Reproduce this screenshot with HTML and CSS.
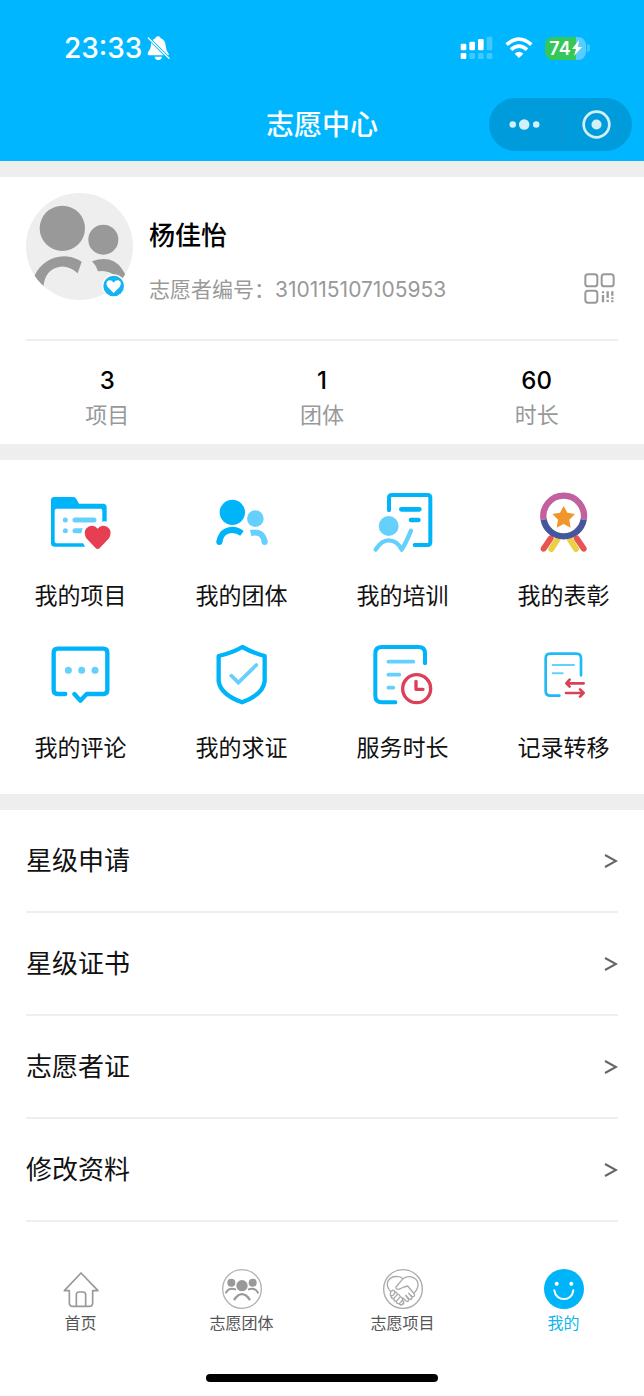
FILE: index.html
```html
<!DOCTYPE html>
<html lang="zh-CN">
<head>
<meta charset="utf-8">
<meta name="viewport" content="width=device-width, initial-scale=1">
<title>志愿中心</title>
<link rel="stylesheet" href="styles.css">
</head>
<body>
<header class="header">
  <div class="status">
    <div class="status-left">
      <span class="time">23:33</span>
      <svg class="bell" viewBox="441 108 69 75" aria-hidden="true">
        <path fill="#fff" d="M474 109q7 0 8 6q14 5 15 22q1 15 9 25q2 4-2 4H446q-5-3-2-9q8-8 9-21q-2-14 13-21q1-6 8-6zM464 170h22q-2 10-11 10t-11-10z"/>
        <path stroke="#00b7ff" stroke-width="9" d="M443 112l68 67"/>
        <path stroke="#fff" stroke-width="4" stroke-linecap="round" d="M445 114l62 61"/>
      </svg>
    </div>
    <div class="status-right">
      <svg class="signal" viewBox="417 108 99 72" fill="#fff" aria-hidden="true">
        <rect x="419" y="131" width="17" height="20" rx="4"/><rect x="445" y="125" width="17" height="26" rx="4"/><rect x="471" y="117" width="17" height="34" rx="4"/>
        <rect x="419" y="159" width="17" height="18" rx="4"/>
        <g opacity=".25"><rect x="497" y="110" width="17" height="41" rx="4"/><rect x="445" y="159" width="17" height="18" rx="4"/><rect x="471" y="159" width="17" height="18" rx="4"/><rect x="497" y="159" width="17" height="18" rx="4"/></g>
      </svg>
      <svg class="wifi" viewBox="550 108 84 72" fill="none" stroke="#fff" stroke-width="11" aria-hidden="true">
        <path d="M555 134q37-33 74 0M568 149q24-21 48 0"/><path fill="#fff" stroke="none" d="M579 161q13-11 26 0l-13 13z"/>
      </svg>
      <div class="battery"><span class="battery-level">74<svg class="bolt" viewBox="0 0 10 16" aria-hidden="true"><path fill="#fff" d="M7 0L0 9h4L2 16l8-9H6z"/></svg></span></div>
    </div>
  </div>
  <div class="navbar">
    <h1 class="title">志愿中心</h1>
    <div class="capsule">
      <button class="capsule-btn" type="button" aria-label="更多">
        <svg class="dots" viewBox="564 350 94 46" aria-hidden="true"><g fill="#d2effc"><circle cx="575" cy="373" r="10"/><circle cx="610" cy="373" r="16"/><circle cx="647" cy="373" r="10"/></g></svg>
      </button>
      <button class="capsule-btn" type="button" aria-label="关闭">
        <svg class="target" viewBox="781 330 86 86" aria-hidden="true"><circle cx="824" cy="373" r="38" fill="none" stroke="#d2effc" stroke-width="8"/><circle cx="824" cy="373" r="15" fill="#d2effc"/></svg>
      </button>
    </div>
  </div>
</header>
<main class="main">
  <section class="profile">
    <div class="user">
      <svg class="avatar" viewBox="78 68 321 321" aria-hidden="true">
        <defs><clipPath id="face"><circle cx="238.500" cy="228.500" r="160.500"/></clipPath></defs>
        <circle cx="238.500" cy="228.500" r="160.500" fill="#eee"/>
        <g clip-path="url(#face)">
          <g fill="#999"><circle cx="187" cy="174" r="68"/><circle cx="310" cy="208" r="45"/>
          <path d="M98 335A96 96 0 0 1 245 274L233 309Q209 287 182 289Q135 295 130 350z"/>
          <path d="M276 273Q336 252 366 296L384 325L350 320Q325 297 294 303Q290 287 276 273z"/></g>
        </g>
        <circle cx="341" cy="347" r="35" fill="#fff"/><circle cx="341" cy="347" r="31" fill="#15b3f0"/>
        <path fill="#fff" d="M341 368l-18-18q-9-15 4-20q9-1 14 7q5-8 14-7q13 5 4 20z"/>
      </svg>
      <div class="user-info">
        <h2 class="name">杨佳怡</h2>
        <p class="number">志愿者编号：310115107105953</p>
      </div>
      <button class="qr" type="button" aria-label="二维码">
        <svg class="qr-icon" viewBox="785 309 93 93" fill="none" stroke="#999" stroke-width="6" aria-hidden="true"><rect x="789" y="313" width="36" height="36" rx="8"/><rect x="838" y="313" width="36" height="36" rx="8"/><rect x="789" y="362" width="36" height="36" rx="8"/><path stroke-width="7" d="M842 364v6M842 375v22M856 364v20M856 389v7M870 364v13M870 382v5M870 391v6"/></svg>
      </button>
    </div>
    <dl class="stats">
      <div class="stat"><dt class="stat-label">项目</dt><dd class="stat-value">3</dd></div>
      <div class="stat"><dt class="stat-label">团体</dt><dd class="stat-value">1</dd></div>
      <div class="stat"><dt class="stat-label">时长</dt><dd class="stat-value">60</dd></div>
    </dl>
  </section>

  <nav class="grid" aria-label="我的服务">
    <a class="tile" href="#projects">
      <svg class="tile-icon" viewBox="133 48 216 216" aria-hidden="true">
        <path fill="#00b4fa" fill-rule="evenodd" d="M161 81h57q6 0 9 6l8 14h72q11 0 11 11v118H161q-10 0-10-10V91q0-10 10-10zM168 116q-6 0-6 6v92q0 6 6 6h131q6 0 6-6v-92q0-6-6-6z"/>
        <g stroke="#66d0fc" stroke-width="15" stroke-linecap="round"><path d="M194 150h.1M194 182h.1M223 150h57M223 182h30"/></g>
        <path fill="#fff" d="M255 233l-7-12q-6-20-6-32q3-26 27-31l22 5 18-9q12-2 20 8v72h-74z"/>
        <path fill="#e83e52" d="M291 237q-4 0-7-4l-27-28q-9-17-1-29q8-10 20-9q10 1 15 9q5-8 15-9q12-1 20 9q8 12-1 29l-27 28q-3 4-7 4z"/>
      </svg>
      <span>我的项目</span></a>
    <a class="tile" href="#groups">
      <svg class="tile-icon" viewBox="616 48 216 216" fill="none" stroke-width="18" aria-hidden="true">
        <circle cx="695" cy="127" r="38" fill="#00b4fa"/><circle cx="764" cy="146" r="25" fill="#66d0fc"/>
        <path stroke="#00b4fa" d="M656 216Q660 192 677 184Q700 173 724 190"/><circle cx="656" cy="216" r="9" fill="#00b4fa"/>
        <path stroke="#66d0fc" d="M750 189Q786 180 792 216"/><circle cx="792" cy="216" r="9" fill="#66d0fc"/>
      </svg>
      <span>我的团体</span></a>
    <a class="tile" href="#training">
      <svg class="tile-icon" viewBox="133 48 216 216" fill="none" stroke-linecap="round" stroke-linejoin="round" aria-hidden="true">
        <path stroke="#00b4fa" stroke-width="12" d="M199 121V84q0-9 9-9h106q9 0 9 9v132q0 9-9 9h-38"/>
        <path stroke="#00b4fa" stroke-width="14" d="M236 118h54M265 150h22"/>
        <circle cx="198" cy="168" r="30" fill="#66d0fc"/>
        <path stroke="#66d0fc" stroke-width="13" d="M159 239Q176 211 198 211Q224 211 237 239Q250 219 265 182"/>
      </svg>
      <span>我的培训</span></a>
    <a class="tile" href="#awards">
      <svg class="tile-icon" viewBox="616 48 216 216" fill="none" aria-hidden="true">
        <g stroke-linecap="round" stroke-width="18"><path stroke="#ecd044" d="M686 237l18-28M760 237l-18-28"/><path stroke="#e8544f" d="M663 236l21-31M783 236l-21-31"/></g>
        <circle cx="723" cy="141" r="61" fill="#fff"/>
        <path stroke="#c3609f" stroke-width="19" d="M663 149A61 61 0 1 1 783 149"/><path stroke="#46569c" stroke-width="19" d="M663 149A61 61 0 0 0 783 149"/>
        <path fill="#f0962b" d="M723 108l11 20 23 4-17 17 4 24-21-11-21 11 4-24-17-17 23-4z"/>
      </svg>
      <span>我的表彰</span></a>
    <a class="tile" href="#comments">
      <svg class="tile-icon" viewBox="133 54 216 216" fill="none" stroke-linecap="round" stroke-linejoin="round" aria-hidden="true">
        <path stroke="#00b4fa" stroke-width="13" d="M194 222h-23q-12 0-12-12V98q0-12 12-12h137q12 0 12 12v112q0 12-12 12h-50l-19 20-18-20"/>
        <path stroke="#66d0fc" stroke-width="21" d="M203 151h.1M243 151h.1M283 151h.1"/>
      </svg>
      <span>我的评论</span></a>
    <a class="tile" href="#verify">
      <svg class="tile-icon" viewBox="616 54 216 216" fill="none" aria-hidden="true">
        <path stroke="#00b4fa" stroke-width="13" stroke-linejoin="round" d="M725 81q30 17 67 27v76q-4 39-68 63q-64-24-70-63v-76q40-9 71-27z"/>
        <path stroke="#66d0fc" stroke-width="11" stroke-linecap="round" d="M692 167l21 21 54-53"/>
      </svg>
      <span>我的求证</span></a>
    <a class="tile" href="#hours">
      <svg class="tile-icon" viewBox="133 54 216 216" fill="none" stroke-linecap="round" stroke-linejoin="round" aria-hidden="true">
        <path stroke="#00b4fa" stroke-width="12" d="M307 130v-30q0-19-20-19H178q-20 0-20 19v128q0 19 20 19h40"/>
        <path stroke="#66d0fc" stroke-width="11" d="M197 125h75M197 164h33M197 203h15"/>
        <circle cx="282" cy="206" r="42" stroke="#db4057" stroke-width="10"/><path stroke="#db4057" stroke-width="10" d="M280 184v24h21"/>
      </svg>
      <span>服务时长</span></a>
    <a class="tile" href="#transfer">
      <svg class="tile-icon" viewBox="616 54 216 216" fill="none" stroke-linecap="round" stroke-linejoin="round" aria-hidden="true">
        <path stroke="#1fb9f7" stroke-width="8" d="M775 166v-51q0-14-14-14h-78q-14 0-14 14v98q0 14 14 14h27"/>
        <path stroke="#66d0fc" stroke-width="6" d="M690 135h64M690 160h30"/>
        <path stroke="#db4057" stroke-width="8" d="M783 190h-52l10-11M731 190l10 10M730 219h53l-11-11M783 219l-11 11"/>
      </svg>
      <span>记录转移</span></a>
  </nav>

  <nav class="menu" aria-label="设置">
    <a class="row" href="#apply"><span>星级申请</span><svg class="chevron" viewBox="0 0 14 16" aria-hidden="true"><path d="M1 2l11 6-11 6"/></svg></a>
    <a class="row" href="#certificate"><span>星级证书</span><svg class="chevron" viewBox="0 0 14 16" aria-hidden="true"><path d="M1 2l11 6-11 6"/></svg></a>
    <a class="row" href="#card"><span>志愿者证</span><svg class="chevron" viewBox="0 0 14 16" aria-hidden="true"><path d="M1 2l11 6-11 6"/></svg></a>
    <a class="row" href="#edit"><span>修改资料</span><svg class="chevron" viewBox="0 0 14 16" aria-hidden="true"><path d="M1 2l11 6-11 6"/></svg></a>
  </nav>
</main>
<footer class="footer">
  <nav class="tabs" aria-label="主导航">
    <a class="tab" href="#home">
      <svg class="tab-icon" viewBox="181 87 120 120" fill="none" stroke="#999" stroke-width="5" stroke-linejoin="round" aria-hidden="true"><path d="M241 99l51 53h-16v36q0 11-11 11h-48q-11 0-11-11v-36h-15z"/><path d="M227 198v-34q0-8 8-8h12q8 0 8 8v34"/></svg>
      <span>首页</span></a>
    <a class="tab" href="#team">
      <svg class="tab-icon" viewBox="664 87 120 120" fill="none" stroke="#999" aria-hidden="true"><circle cx="724" cy="147" r="58" stroke="#b2b2b2" stroke-width="4"/><g fill="#999" stroke="none"><circle cx="692" cy="128" r="12"/><circle cx="756" cy="128" r="12"/><circle cx="724" cy="137" r="17"/></g><g stroke-width="6"><path d="M675 160q9-20 31-11M773 160q-9-20-31-11"/><path stroke-width="7" d="M700 180q24-35 48 0"/></g></svg>
      <span>志愿团体</span></a>
    <a class="tab" href="#project">
      <svg class="tab-icon" viewBox="181 87 120 120" fill="none" stroke="#aaa" stroke-width="4" stroke-linecap="round" stroke-linejoin="round" aria-hidden="true"><circle cx="241" cy="147" r="58"/><path d="M204 155q-14-17-9-30q9-18 32-15q8 1 14 6q9-7 22-6q21 4 23 22q1 13-10 25M241 116l-21 25q-2 7 8 7l16-7 11-3 20 24q3 9-6 8l-11-10M258 160l10 12q0 8-8 5l-11-11M249 167l9 12q-1 8-8 4l-9-9M242 183q4 8-3 11h-6M204 155l-1 10q5 5 10-1l4-7q-1-7-7-6zM205 167q0 9 8 9l11-13q-1-8-8-6M213 176q1 8 8 8l12-14q-2-8-9-7M221 184q1 8 9 7l10-11q-1-8-7-10M230 191q2 6 8 3l5-7q-1-5-4-6"/></svg>
      <span>志愿项目</span></a>
    <a class="tab tab-active" href="#mine" aria-current="page">
      <svg class="tab-icon" viewBox="663 87 120 120" aria-hidden="true"><circle cx="723" cy="147" r="60" fill="#00b4fa"/><circle cx="701" cy="131" r="6" fill="#fff"/><circle cx="745" cy="131" r="6" fill="#fff"/><path fill="none" stroke="#fff" stroke-width="6" stroke-linecap="round" d="M694 151c5 35 53 35 57 0"/></svg>
      <span>我的</span></a>
  </nav>
  <div class="home-bar"></div>
</footer>
</body>
</html>
```

FILE: styles.css
```css
* {
  box-sizing: border-box;
}

body {
  margin: 0;
  background: #fff;
  color: #111;
  font-family: Inter, "Noto Sans CJK SC", sans-serif;
}

h1, h2, p, dl, dd {
  margin: 0;
}

a {
  color: inherit;
  text-decoration: none;
}

button {
  padding: 0;
  border: 0;
  background: none;
}

svg {
  display: block;
  flex: none;
}

.header {
  height: 161px;
  background: #00b7ff;
  color: #fff;
}

.status {
  display: flex;
  justify-content: space-between;
  align-items: center;
  height: 96px;
  padding: 0 54px 0 64px;
}

.status-left,
.status-right {
  display: flex;
  align-items: center;
}

.status-left {
  gap: 5px;
}

.status-right {
  gap: 12px;
}

.time {
  font-size: 28px;
  font-weight: 500;
}

.bell {
  width: 23px;
  height: 25px;
}

.signal {
  width: 33px;
  height: 24px;
}

.wifi {
  width: 28px;
  height: 24px;
}

.battery {
  display: flex;
  align-items: center;
  gap: 1px;
}

.battery::after {
  content: "";
  width: 3px;
  height: 8px;
  border-radius: 0 4px 4px 0;
  background: #40c9ff;
}

.battery-level {
  display: flex;
  align-items: center;
  justify-content: center;
  gap: 1px;
  width: 41px;
  height: 23px;
  border-radius: 8px;
  background: linear-gradient(to right, #34c759 75%, #59cdff 75%);
  font-size: 18px;
  font-weight: 600;
}

.bolt {
  width: 10px;
  height: 16px;
}

.navbar {
  display: grid;
  grid-template-columns: 1fr auto 1fr;
  align-items: center;
  height: 57px;
  padding: 0 12px;
}

.title {
  grid-column: 2;
  font-size: 28px;
  font-weight: 500;
  line-height: 40px;
}

.capsule {
  display: flex;
  justify-self: end;
  width: 143px;
  height: 53px;
  padding: 10px 0;
  border-radius: 27px;
  background: #009bdb;
}

.capsule-btn {
  display: flex;
  flex: 1;
  align-items: center;
  justify-content: center;
}

.capsule-btn + .capsule-btn {
  border-left: 1px solid #1293cb;
}

.dots {
  width: 31px;
  height: 15px;
}

.target {
  width: 29px;
  height: 29px;
}

.profile {
  border-top: 16px solid #eee;
}

.user {
  display: flex;
  gap: 16px;
  margin: 0 26px;
  padding: 16px 0 33px;
  border-bottom: 2px solid #eee;
}

.avatar {
  width: 107px;
  height: 107px;
}

.user-info {
  flex: 1;
  padding-top: 23px;
}

.name {
  color: #000;
  font-size: 26px;
  font-weight: 500;
  line-height: 40px;
}

.number {
  margin-top: 18px;
  color: #999;
  font-size: 21px;
  line-height: 32px;
}

.qr {
  align-self: flex-end;
  margin: 0 3px 2px 0;
}

.qr-icon {
  width: 31px;
  height: 31px;
}

.stats {
  display: grid;
  grid-template-columns: repeat(3, 1fr);
  padding: 22px 0 13px;
  text-align: center;
}

.stat {
  display: flex;
  flex-direction: column-reverse;
}

.stat-value {
  color: #000;
  font-size: 24px;
  font-weight: 500;
  line-height: 36px;
}

.stat-label {
  color: #999;
  font-size: 22px;
  line-height: 32px;
}

.grid {
  display: grid;
  grid-template-columns: repeat(4, 1fr);
  row-gap: 24px;
  padding: 26px 0 28px;
  border: solid #eee;
  border-width: 16px 0;
}

.tile {
  display: flex;
  flex-direction: column;
  align-items: center;
  gap: 20px;
  font-size: 23px;
  line-height: 36px;
}

.tile-icon {
  width: 72px;
  height: 72px;
}

.menu {
  padding: 0 26px;
}

.row {
  display: flex;
  align-items: center;
  justify-content: space-between;
  height: 103px;
  border-bottom: 2px solid #eee;
  font-size: 26px;
  line-height: 40px;
}

.chevron {
  width: 14px;
  height: 16px;
  fill: none;
  stroke: #666;
  stroke-width: 2;
}

.footer {
  padding: 47px 0 14px;
}

.tabs {
  display: grid;
  grid-template-columns: repeat(4, 1fr);
}

.tab {
  display: flex;
  flex-direction: column;
  align-items: center;
  gap: 2px;
  color: #555;
  font-size: 16px;
  line-height: 24px;
}

.tab-active {
  color: #14b4ee;
}

.tab-icon {
  width: 40px;
  height: 40px;
}

.home-bar {
  width: 36%;
  height: 8px;
  margin: 39px auto 0;
  border-radius: 4px;
  background: #000;
}
```
